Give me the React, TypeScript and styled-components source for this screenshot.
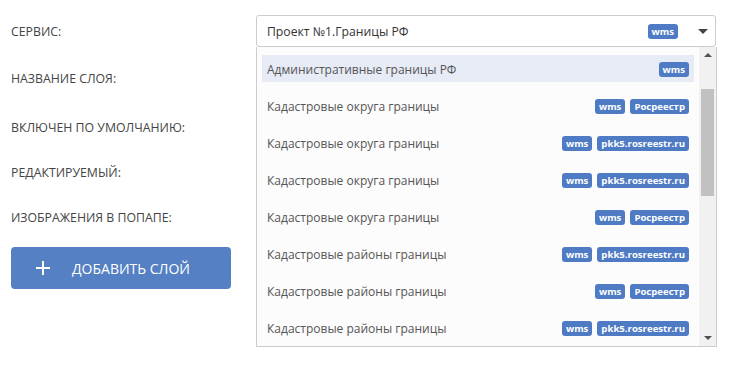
import React from 'react';
import styled, { createGlobalStyle } from 'styled-components';

const GlobalStyle = createGlobalStyle`
  html, body {
    margin: 0;
    padding: 0;
    background: #ffffff;
    font-family: "Open Sans", "Noto Sans", sans-serif;
  }
`;

type Option = { title: string; tags: string[]; active?: boolean };

const OPTIONS: Option[] = [
  { title: 'Административные границы РФ', tags: ['wms'], active: true },
  { title: 'Кадастровые округа границы', tags: ['wms', 'Росреестр'] },
  { title: 'Кадастровые округа границы', tags: ['wms', 'pkk5.rosreestr.ru'] },
  { title: 'Кадастровые округа границы', tags: ['wms', 'pkk5.rosreestr.ru'] },
  { title: 'Кадастровые округа границы', tags: ['wms', 'Росреестр'] },
  { title: 'Кадастровые районы границы', tags: ['wms', 'pkk5.rosreestr.ru'] },
  { title: 'Кадастровые районы границы', tags: ['wms', 'Росреестр'] },
  { title: 'Кадастровые районы границы', tags: ['wms', 'pkk5.rosreestr.ru'] },
];

// heights of the form rows, the controls under the menu differ in size
const ROWS = [
  { label: 'Сервис:', height: 46 },
  { label: 'Название слоя:', height: 48 },
  { label: 'Включен по умолчанию:', height: 50 },
  { label: 'Редактируемый:', height: 40 },
  { label: 'Изображения в попапе:', height: 50 },
];

const App: React.FC = () => {
  return (
    <Page>
      <GlobalStyle />
      <Form>
        {ROWS.map((row, i) => (
          <FieldRow key={row.label} $height={row.height}>
            <Label>{row.label}</Label>
            {i === 0 && (
              <SelectWrap>
                <SelectBox>
                  <SelectValue>Проект №1.Границы РФ</SelectValue>
                  <Tag>wms</Tag>
                  <Caret />
                </SelectBox>
                <Menu>
                  <OptionList>
                    {OPTIONS.map((opt, j) => (
                      <OptionRow key={j} $active={opt.active}>
                        <OptionTitle>{opt.title}</OptionTitle>
                        <Tags>
                          {opt.tags.map((t) => (
                            <Tag key={t}>{t}</Tag>
                          ))}
                        </Tags>
                      </OptionRow>
                    ))}
                  </OptionList>
                  <Scrollbar>
                    <ArrowUp />
                    <Track>
                      <Thumb />
                    </Track>
                    <ArrowDown />
                  </Scrollbar>
                </Menu>
              </SelectWrap>
            )}
          </FieldRow>
        ))}
      </Form>
      <AddButton>
        <svg width="16" height="16" viewBox="0 0 16 16">
          <path d="M8 1v14M1 8h14" stroke="#fff" strokeWidth="2" />
        </svg>
        <span>Добавить слой</span>
      </AddButton>
    </Page>
  );
};

const Page = styled.div`
  width: 731px;
  height: 374px;
  box-sizing: border-box;
  padding: 8px 0 0 11px;
  position: relative;
  overflow: hidden;
`;

const Form = styled.div`
  display: flex;
  flex-direction: column;
`;

const FieldRow = styled.div<{ $height: number }>`
  height: ${(p) => p.$height}px;
  display: flex;
  align-items: center;
`;

const Label = styled.div`
  width: 245px;
  font-size: 12.3px;
  color: #444;
  text-transform: uppercase;
`;

const SelectWrap = styled.div`
  position: relative;
  width: 460px;
`;

const SelectBox = styled.div`
  height: 32px;
  box-sizing: border-box;
  border: 1px solid #cccccc;
  border-radius: 3px;
  display: flex;
  align-items: center;
  padding: 0 7px 0 10px;
  background: #fff;
`;

const SelectValue = styled.div`
  flex: 1;
  font-size: 12.2px;
  color: #333;
`;

const Caret = styled.div`
  width: 0;
  height: 0;
  margin-left: 20px;
  border-left: 5px solid transparent;
  border-right: 5px solid transparent;
  border-top: 5px solid #444;
`;

const Menu = styled.div`
  position: absolute;
  top: 32px;
  left: 0;
  width: 461px;
  height: 300px;
  box-sizing: border-box;
  border: 1px solid #cccccc;
  border-top: none;
  background: #fcfcfc;
  display: flex;
  z-index: 5;
`;

const OptionList = styled.div`
  flex: 1;
  padding: 8px 5px 0 5px;
  overflow: hidden;
`;

const OptionRow = styled.div<{ $active?: boolean }>`
  height: 27px;
  margin-bottom: 10px;
  padding: 1px 5px 0;
  box-sizing: border-box;
  display: flex;
  align-items: center;
  justify-content: space-between;
  background: ${(p) => (p.$active ? '#e6ebf5' : 'transparent')};
`;

const OptionTitle = styled.div`
  font-size: 12px;
  color: #555;
`;

const Tags = styled.div`
  display: flex;
  gap: 5px;
`;

const Tag = styled.span`
  display: inline-flex;
  align-items: center;
  height: 15px;
  padding: 0 4px;
  border-radius: 3px;
  background: #4e7bc4;
  color: #fff;
  font-size: 9.6px;
  font-weight: 700;
`;

const Scrollbar = styled.div`
  width: 17px;
  background: #f1f1f1;
  display: flex;
  flex-direction: column;
  align-items: center;
`;

const ArrowUp = styled.div`
  margin-top: 6px;
  width: 0;
  height: 0;
  border-left: 4px solid transparent;
  border-right: 4px solid transparent;
  border-bottom: 4px solid #505050;
`;

const ArrowDown = styled.div`
  margin-bottom: 6px;
  width: 0;
  height: 0;
  border-left: 4px solid transparent;
  border-right: 4px solid transparent;
  border-top: 4px solid #505050;
`;

const Track = styled.div`
  flex: 1;
  width: 100%;
  display: flex;
  justify-content: center;
  padding-top: 32px;
`;

const Thumb = styled.div`
  width: 13px;
  height: 107px;
  background: #c1c1c1;
`;

const AddButton = styled.button`
  margin-top: 5px;
  width: 220px;
  height: 42px;
  border: none;
  border-radius: 4px;
  background: #5580c3;
  color: #fff;
  display: flex;
  align-items: center;
  padding: 0 0 0 24px;
  gap: 21px;
  font-family: "Open Sans", "Noto Sans", sans-serif;
  font-size: 14px;
  text-transform: uppercase;
  cursor: pointer;
`;

export default App;
